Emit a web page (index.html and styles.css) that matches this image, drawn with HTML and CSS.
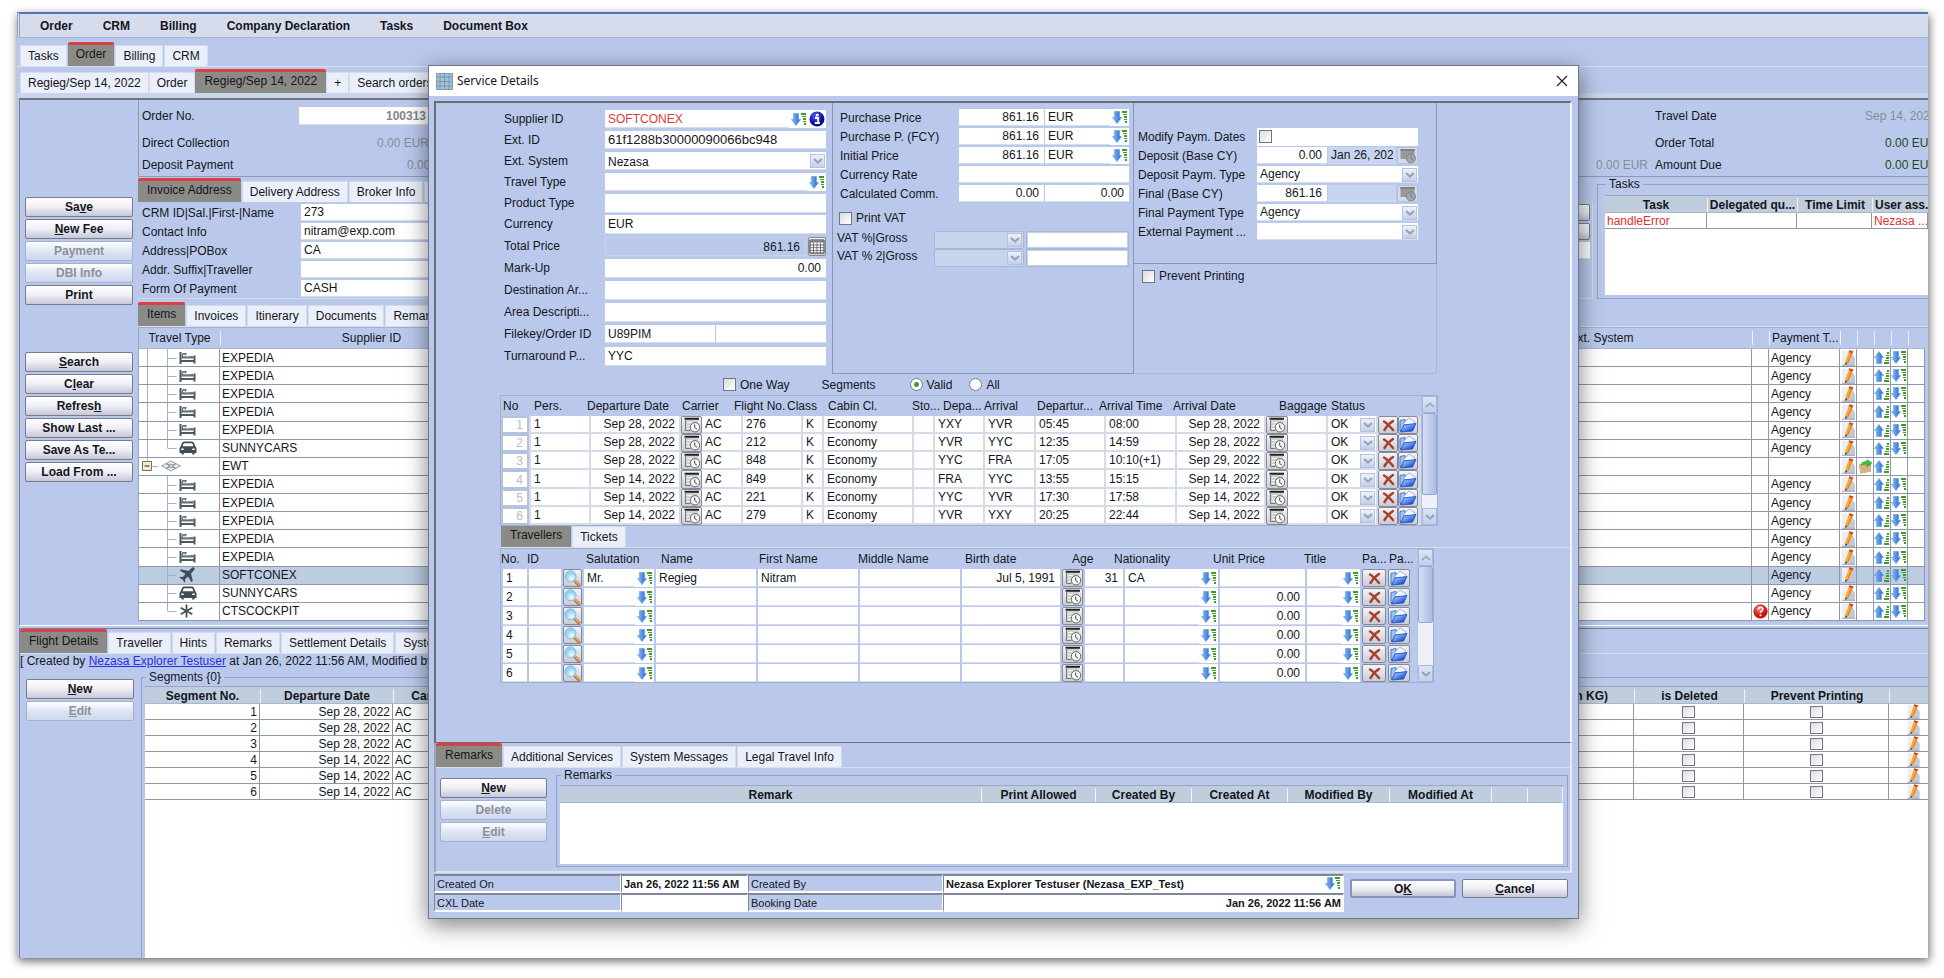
FILE: index.html
```html
<!DOCTYPE html>
<html lang="en">
<head>
<meta charset="utf-8">
<title>Service Details</title>
<link rel="stylesheet" href="styles.css">
</head>
<body>
<svg class="defs" width="0" height="0" aria-hidden="true">
  <defs>
    <linearGradient id="gBlue" x1="0" x2="1"><stop offset="0" stop-color="#8cc4fb"/><stop offset="1" stop-color="#2463c4"/></linearGradient>
    <linearGradient id="gFold" x1="0" y1="0" x2="1" y2="1"><stop offset="0" stop-color="#d8ecff"/><stop offset=".8" stop-color="#1550d8"/></linearGradient>
    <radialGradient id="gLens" cx=".6" cy=".7"><stop offset="0" stop-color="#f2fcff"/><stop offset="1" stop-color="#8fd3f2"/></radialGradient>
    <radialGradient id="gInfo" cx=".4" cy=".3"><stop offset="0" stop-color="#5a64f0"/><stop offset="1" stop-color="#0a0a9c"/></radialGradient>
    <radialGradient id="gHelp" cx=".4" cy=".3"><stop offset="0" stop-color="#ff8a80"/><stop offset="1" stop-color="#c8120e"/></radialGradient>
  </defs>
  <symbol id="i-down" viewBox="0 0 16 13"><path d="M2.500.5h5v6h2L5 12.500.5 6.500h2z" fill="url(#gBlue)" stroke="#5b98e4" stroke-width=".6"/><g fill="#3d9a22"><path d="M10 0h5v2h-5zM11 3h4v1h-4zM12 5h3v2h-3zM12 8h3v1h-3zM13 10h2v2h-2z"/></g></symbol>
  <symbol id="i-up" viewBox="0 0 16 13"><path d="M2.500 12.500h5v-6h2L5 .5.5 6.500h2z" fill="url(#gBlue)" stroke="#5b98e4" stroke-width=".6"/><g fill="#3d9a22"><path d="M13 1h2v2h-2zM12 4h3v1h-3zM12 6h3v2h-3zM11 9h4v1h-4zM10 11h5v2h-5z"/></g></symbol>
  <symbol id="i-pencil" viewBox="0 0 15 16"><path d="M1 1h10v14H1z" fill="#eceef4"/><path d="M11 4l3 4v7H4l4-4z" fill="#c2c8d8"/><path d="M1 15.300h13" stroke="#9ba2b6"/><path d="M8.500.3l3.800 1.200-4.800 11-3.200 2.200.1-4z" fill="#f7ad2c"/><path d="M10.700 1l1.600.5-4.800 11-1.600 1z" fill="#e88220"/><path d="M8.500.3l3.800 1.200-.9 2-3.700-1.300z" fill="#d8452c"/><path d="M4.400 12.300l-.2 2.700 2.100-1.500z" fill="#333"/></symbol>
  <symbol id="i-bed" viewBox="0 0 17 12"><path d="M1.500 0v12M1 9h15M15.500 3.500v8" stroke="#4b5960" stroke-width="2" fill="none"/><path d="M2 6l1.500-5H8L6 4.500 14.500 4v2.500H2z" fill="#65737a"/><path d="M4 3.500h2" stroke="#fff" stroke-width="1.400"/></symbol>
  <symbol id="i-car" viewBox="0 0 18 14"><path d="M3.200 1.500Q4 .5 5 .5h8q1 0 1.800 1L16.500 5.500l1 1.500v5h-2v1.500h-2.300V12H4.800v1.500H2.500V12h-2V7l1-1.500z" fill="#404e57"/><path d="M4.800 2.200h8.400l1.200 3H3.600z" fill="#fff"/><path d="M2.200 8.300h2.500M13.300 8.300h2.500" stroke="#fff" stroke-width="1.400"/></symbol>
  <symbol id="i-plane" viewBox="0 0 16 16"><path d="M15.300.7q-1.200-1-3.400 1L9.500 4 2 2.200.7 3.500 6.500 7 3.800 10 1.400 9.700.5 10.700l3.100 1.700 1.700 3.100 1-.9-.3-2.400L9 9.500l3.500 5.800 1.300-1.300L12 6.500l2.300-2.400q2-2.200 1-3.400z" fill="#404e57"/></symbol>
  <symbol id="i-star" viewBox="0 0 14 14"><path d="M7 .5v13M1.200 3.700l11.600 6.600M1.200 10.300l11.600-6.600" stroke="#404e57" stroke-width="1.700"/></symbol>
  <symbol id="i-group" viewBox="0 0 20 12"><path d="M10 1l5 2.500 4.500 2.500-9.500 5-9.500-5L5 3.500z" fill="#e4e7ea" stroke="#9aa3a8"/><path d="M5 3.500l10 5M15 3.500l-10 5" stroke="#7f898f" stroke-width="1.300"/><ellipse cx="10" cy="6" rx="2.200" ry="1.200" fill="#fff" stroke="#7f898f"/></symbol>
  <symbol id="i-minus" viewBox="0 0 10 10"><path d="M.5.5h9v9h-9z" fill="#f5edd0" stroke="#7b6f4c"/><path d="M2.500 5h5" stroke="#222"/></symbol>
  <symbol id="i-help" viewBox="0 0 15 15"><circle cx="7.500" cy="7.500" r="6.800" fill="url(#gHelp)" stroke="#a91a16" stroke-width=".6"/><path d="M5.300 5.600q0-2.300 2.200-2.300t2.200 2q0 1-1.200 1.800-1 .6-1 1.700" fill="none" stroke="#fff" stroke-width="1.600"/><circle cx="7.500" cy="11.200" r="1" fill="#fff"/></symbol>
  <symbol id="i-move" viewBox="0 0 15 15"><path d="M1 5.500l5-.5 1 1 6-1v7.500L2.500 14.500z" fill="#b8955c"/><path d="M1 5.500l12 1.500v5.500L2.500 14.500z" fill="#d3b57e"/><path d="M3 6q1-4 6-3.500V.5l5 3.500-5 3.500V5.500Q5.500 5 3 6z" fill="#3fbf3a" stroke="#2b8f28" stroke-width=".5"/></symbol>
  <symbol id="i-cal" viewBox="0 0 18 16"><path d="M2.500 1.500h12.500v10H2.500z" fill="#d0d0ce"/><path d="M1.500 1.800h14.500" stroke="#222" stroke-width="2"/><path d="M4 5.500h5M4 8.500h3M4 11.500h3" stroke="#f4f4f4"/><path d="M2.500 2v11.500h5" stroke="#777" fill="none"/><circle cx="12" cy="10.300" r="4.700" fill="#f7f7f7" stroke="#666"/><path d="M11.700 7.500v3l2.300 1.800" stroke="#444" fill="none"/></symbol>
  <symbol id="i-caloff" viewBox="0 0 18 16"><path d="M1.500 1h14v10h-14z" fill="#98999c"/><path d="M1.500 2h14.500" stroke="#808184" stroke-width="2"/><circle cx="12" cy="10.500" r="4.500" fill="#a5a6a9" stroke="#808184"/><path d="M12 7.500v3l2.300 1.700" stroke="#77787b" fill="none"/></symbol>
  <symbol id="i-lens" viewBox="0 0 17 17"><path d="M10.500 10.500l5 5" stroke="#b06c22" stroke-width="3"/><path d="M10.500 10l5 5" stroke="#f2b35c" stroke-width="1.200"/><circle cx="6.500" cy="6.300" r="5.500" fill="url(#gLens)" stroke="#8fb9d2"/></symbol>
  <symbol id="i-x" viewBox="0 0 13 13"><path d="M2 2.500q3.500 2 9 8.500M11 2Q6 5 2.500 11" stroke="#a8402b" stroke-width="2.500" fill="none" stroke-linecap="round"/></symbol>
  <symbol id="i-open" viewBox="0 0 18 16"><path d="M1 3.500L6 2.500v11H1z" fill="#9cc4f6" stroke="#1b57c8" stroke-width=".7"/><path d="M4 7l6-6 6 4-3 4z" fill="#f4f8ff" stroke="#7a9cd4" stroke-width=".7"/><path d="M5 8l12-1.500-3.500 7.500L1.500 15z" fill="url(#gFold)" stroke="#0f49c6" stroke-width=".8"/></symbol>
  <symbol id="i-calc" viewBox="0 0 16 15"><path d="M1 1h14v13H1z" fill="#fff" stroke="#333"/><path d="M1 2.500h14" stroke="#777" stroke-width="2"/><path d="M1 6h14M1 8.700h14M1 11.400h14M4.500 4v10M8 4v10M11.500 4v10" stroke="#555" stroke-width=".8"/></symbol>
  <symbol id="i-info" viewBox="0 0 16 16"><circle cx="8" cy="8" r="7.500" fill="url(#gInfo)"/><circle cx="8.300" cy="4" r="1.500" fill="#fff"/><path d="M6 7h3.200v4.500M5.800 12h5" stroke="#fff" stroke-width="1.800" fill="none"/></symbol>
  <symbol id="i-app" viewBox="0 0 17 17"><path d="M0 0h17v17H0z" fill="#a6c2d0"/><path d="M0 4h17M0 8.500h17M0 13h17M4 0v17M8.500 0v17M13 0v17" stroke="#7799ae"/><path d="M.5.5h16v16H.5z" fill="none" stroke="#7b9db1"/></symbol>
  <symbol id="i-close" viewBox="0 0 12 12"><path d="M1 1l10 10M11 1L1 11" stroke="#222" stroke-width="1.200"/></symbol>
  <symbol id="i-chev" viewBox="0 0 10 6"><path d="M1 1l4 3.500L9 1" stroke="#9aa3b6" stroke-width="2.200" fill="none"/></symbol>
  <symbol id="i-chevup" viewBox="0 0 10 6"><path d="M1 5l4-3.500L9 5" stroke="#a3adc0" stroke-width="2" fill="none"/></symbol>
</svg>

<div class="app">
  <nav class="menu">
    <a href="#">Order</a><a href="#">CRM</a><a href="#">Billing</a><a href="#">Company Declaration</a><a href="#">Tasks</a><a href="#">Document Box</a>
  </nav>
  <div class="tabs big first"><button>Tasks</button><button class="on">Order</button><button>Billing</button><button>CRM</button></div>
  <div class="tabs big second"><button>Regieg/Sep 14, 2022</button><button>Order</button><button class="on">Regieg/Sep 14, 2022</button><button>+</button><button>Search orders</button></div>

  <main class="order">
    <aside class="side">
      <div class="btns">
        <button class="btn">Sa<u>v</u>e</button><button class="btn"><u>N</u>ew Fee</button><button class="btn" disabled>Payment</button><button class="btn" disabled>DBI Info</button><button class="btn">Print</button>
      </div>
      <div class="btns">
        <button class="btn"><u>S</u>earch</button><button class="btn">C<u>l</u>ear</button><button class="btn">Refres<u>h</u></button><button class="btn">Show Last ...</button><button class="btn">Save As Te...</button><button class="btn">Load From ...</button>
      </div>
    </aside>
    <div class="content">
      <section class="summary">
        <label for="orderNo">Order No.</label><input id="orderNo" class="orderno" value="100313"><span></span><span></span><span>Travel Date</span><span class="mute">Sep 14, 2022</span>
        <span>Direct Collection</span><span class="mute v1">0.00 EUR</span><span></span><span></span><span>Order Total</span><span class="green">0.00 EUR</span>
        <span>Deposit Payment</span><span class="mute v2">0.00 EUR</span><span></span><span class="mute">0.00 EUR</span><span>Amount Due</span><span class="green">0.00 EUR</span>
      </section>
      <section class="middle">
        <div class="addr">
          <div class="tabs"><button class="on">Invoice Address</button><button>Delivery Address</button><button>Broker Info</button><button>Agency Info</button></div>
          <div class="addrbody">
            <div class="addrform">
              <label for="crm">CRM ID|Sal.|First-|Name</label><input id="crm" value="273">
              <label for="contact">Contact Info</label><input id="contact" value="nitram@exp.com">
              <label for="address">Address|POBox</label><input id="address" value="CA">
              <label for="suffix">Addr. Suffix|Traveller</label><input id="suffix">
              <label for="fop">Form Of Payment</label><input id="fop" value="CASH">
            </div>
            <div class="addrtools"><button class="btn" aria-label="Search address"></button><button class="btn" aria-label="Edit address"></button><input aria-label="Address type"></div>
          </div>
        </div>
        <fieldset class="tasks">
          <legend>Tasks</legend>
          <div class="sheet">
            <table class="grid bold taskgrid">
              <thead><tr><th>Task</th><th>Delegated qu...</th><th>Time Limit</th><th class="l">User ass...</th></tr></thead>
              <tbody><tr class="red"><td>handleError</td><td></td><td></td><td>Nezasa ...</td></tr></tbody>
            </table>
          </div>
        </fieldset>
      </section>
      <section class="itemsbox">
        <div class="tabs"><button class="on">Items</button><button>Invoices</button><button>Itinerary</button><button>Documents</button><button>Remarks</button></div>
        <table class="grid items">
          <thead><tr><th>Travel Type</th><th>Supplier ID</th><th></th><th>Ext. System</th><th></th><th class="l">Payment T...</th><th></th><th></th><th></th><th></th><th></th></tr></thead>
          <tbody id="items"></tbody>
        </table>
      </section>
    </div>
  </main>

  <section class="lower">
    <div class="tabs"><button class="on">Flight Details</button><button>Traveller</button><button>Hints</button><button>Remarks</button><button>Settlement Details</button><button>System Messages</button></div>
    <p class="audit">[ Created by <a href="#">Nezasa Explorer Testuser</a> at Jan 26, 2022 11:56 AM, Modified by</p>
    <div class="lowerbody">
      <div class="btns"><button class="btn"><u>N</u>ew</button><button class="btn" disabled><u>E</u>dit</button></div>
      <fieldset class="segbox">
        <legend>Segments {0}</legend>
        <div class="sheet">
          <table class="grid bold flights">
            <thead><tr><th>Segment No.</th><th>Departure Date</th><th>Carrier</th><th></th><th>Baggage (in KG)</th><th>is Deleted</th><th>Prevent Printing</th><th></th></tr></thead>
            <tbody id="flights"></tbody>
          </table>
        </div>
      </fieldset>
    </div>
  </section>

  <div class="dialog" role="dialog" aria-label="Service Details">
    <header class="title"><svg width="17" height="17"><use href="#i-app"/></svg><h1>Service Details</h1><button class="close" aria-label="Close"><svg width="12" height="12"><use href="#i-close"/></svg></button></header>
    <div class="pane">
      <div class="top">
        <div class="supplier">
          <label for="sup">Supplier ID</label><span class="look"><input id="sup" class="redtext" value="SOFTCONEX"><button aria-label="Choose supplier"><svg width="16" height="13"><use href="#i-down"/></svg></button><button aria-label="Supplier info"><svg width="16" height="16"><use href="#i-info"/></svg></button></span>
          <label for="extid">Ext. ID</label><input id="extid" class="wide" value="61f1288b30000090066bc948">
          <label for="extsys">Ext. System</label><span class="combo"><select id="extsys"><option>Nezasa</option></select><i><svg width="10" height="6"><use href="#i-chev"/></svg></i></span>
          <label for="ttype">Travel Type</label><span class="look"><input id="ttype"><button aria-label="Choose travel type"><svg width="16" height="13"><use href="#i-down"/></svg></button></span>
          <label for="ptype">Product Type</label><input id="ptype">
          <label for="cur">Currency</label><input id="cur" value="EUR">
          <label for="total">Total Price</label><span class="totals"><input id="total" class="r ro" value="861.16" readonly><button class="tool" aria-label="Calculator"><svg width="16" height="15"><use href="#i-calc"/></svg></button></span>
          <label for="mark">Mark-Up</label><input id="mark" class="r" value="0.00">
          <label for="dest">Destination Ar...</label><input id="dest">
          <label for="area">Area Descripti...</label><input id="area">
          <label for="fkey">Filekey/Order ID</label><span class="pair"><input id="fkey" value="U89PIM"><input aria-label="Order ID"></span>
          <label for="turn">Turnaround P...</label><input id="turn" value="YYC">
        </div>
        <div class="prices">
          <div class="priceform">
            <label for="pp">Purchase Price</label><input id="pp" class="r" value="861.16"><span class="look"><input aria-label="Purchase currency" value="EUR"><button aria-label="Choose currency"><svg width="16" height="13"><use href="#i-down"/></svg></button></span>
            <label for="pf">Purchase P. (FCY)</label><input id="pf" class="r" value="861.16"><span class="look"><input aria-label="Foreign currency" value="EUR"><button aria-label="Choose currency"><svg width="16" height="13"><use href="#i-down"/></svg></button></span>
            <label for="ip">Initial Price</label><input id="ip" class="r" value="861.16"><span class="look"><input aria-label="Initial currency" value="EUR"><button aria-label="Choose currency"><svg width="16" height="13"><use href="#i-down"/></svg></button></span>
            <label for="rate">Currency Rate</label><input id="rate" class="span2">
            <label for="comm">Calculated Comm.</label><input id="comm" class="r" value="0.00"><input aria-label="Commission amount" class="r" value="0.00">
          </div>
          <label class="check printvat"><input type="checkbox">Print VAT</label>
          <div class="vatform">
            <label for="vat1">VAT %|Gross</label><span class="combo off"><select id="vat1" disabled><option></option></select><i><svg width="10" height="6"><use href="#i-chev"/></svg></i></span><input aria-label="Gross">
            <label for="vat2">VAT % 2|Gross</label><span class="combo off"><select id="vat2" disabled><option></option></select><i><svg width="10" height="6"><use href="#i-chev"/></svg></i></span><input aria-label="Gross 2">
          </div>
        </div>
        <div class="payments">
          <div class="payform">
            <label for="mod">Modify Paym. Dates</label><span class="checkcell"><input id="mod" type="checkbox"></span>
            <label for="dep">Deposit (Base CY)</label><span class="amount"><input id="dep" class="r" value="0.00"><input aria-label="Deposit date" value="Jan 26, 2022" class="ro"><button class="tool flat" aria-label="Pick date"><svg width="18" height="16"><use href="#i-caloff"/></svg></button></span>
            <label for="dpt">Deposit Paym. Type</label><span class="combo"><select id="dpt"><option>Agency</option></select><i><svg width="10" height="6"><use href="#i-chev"/></svg></i></span>
            <label for="fin">Final (Base CY)</label><span class="amount"><input id="fin" class="r" value="861.16"><input aria-label="Final date" class="ro"><button class="tool flat" aria-label="Pick date"><svg width="18" height="16"><use href="#i-caloff"/></svg></button></span>
            <label for="fpt">Final Payment Type</label><span class="combo"><select id="fpt"><option>Agency</option></select><i><svg width="10" height="6"><use href="#i-chev"/></svg></i></span>
            <label for="ext">External Payment ...</label><span class="combo"><select id="ext"><option></option></select><i><svg width="10" height="6"><use href="#i-chev"/></svg></i></span>
          </div>
          <div class="prevent"><label class="check"><input type="checkbox">Prevent Printing</label></div>
        </div>
      </div>
      <div class="options">
        <label class="check"><input type="checkbox">One Way</label><span>Segments</span>
        <label class="check"><input type="radio" name="seg" checked>Valid</label><label class="check"><input type="radio" name="seg">All</label>
      </div>
      <div class="scrollbox segs">
        <table class="cells segtable">
          <thead><tr><th>No</th><th>Pers.</th><th>Departure Date</th><th>Carrier</th><th>Flight No.</th><th>Class</th><th>Cabin Cl.</th><th>Sto...</th><th>Depa...</th><th>Arrival</th><th>Departur...</th><th>Arrival Time</th><th>Arrival Date</th><th>Baggage</th><th>Status</th></tr></thead>
          <tbody id="segs"></tbody>
        </table>
        <div class="bar"><b><svg width="10" height="6"><use href="#i-chevup"/></svg></b><s></s><em></em><b><svg width="10" height="6"><use href="#i-chev"/></svg></b></div>
      </div>
      <div class="tabs plain"><button class="on">Travellers</button><button>Tickets</button></div>
      <div class="scrollbox trav">
        <table class="cells travtable">
          <thead><tr><th>No.</th><th>ID</th><th>Salutation</th><th>Name</th><th>First Name</th><th>Middle Name</th><th>Birth date</th><th>Age</th><th>Nationality</th><th>Unit Price</th><th>Title</th><th>Pa...</th><th>Pa...</th></tr></thead>
          <tbody id="trav"></tbody>
        </table>
        <div class="bar short"><b><svg width="10" height="6"><use href="#i-chevup"/></svg></b><s></s><em></em><b><svg width="10" height="6"><use href="#i-chev"/></svg></b></div>
      </div>
    </div>
    <div class="remarks">
      <div class="tabs"><button class="on">Remarks</button><button>Additional Services</button><button>System Messages</button><button>Legal Travel Info</button></div>
      <div class="remarksbody">
        <div class="btns"><button class="btn"><u>N</u>ew</button><button class="btn" disabled>Delete</button><button class="btn" disabled><u>E</u>dit</button></div>
        <fieldset>
          <legend>Remarks</legend>
          <div class="sheet">
            <table class="grid bold remgrid"><thead><tr><th>Remark</th><th>Print Allowed</th><th>Created By</th><th>Created At</th><th>Modified By</th><th>Modified At</th><th></th><th></th><th></th></tr></thead></table>
          </div>
        </fieldset>
      </div>
    </div>
    <footer class="foot">
      <dl>
        <dt>Created On</dt><dd>Jan 26, 2022 11:56 AM</dd><dt>Created By</dt><dd class="by">Nezasa Explorer Testuser (Nezasa_EXP_Test)<svg width="16" height="13"><use href="#i-down"/></svg></dd>
        <dt>CXL Date</dt><dd></dd><dt>Booking Date</dt><dd class="r">Jan 26, 2022 11:56 AM</dd>
      </dl>
      <button class="btn primary">O<u>K</u></button><button class="btn"><u>C</u>ancel</button>
    </footer>
  </div>
</div>
<script src="app.js"></script>
</body>
</html>
```

FILE: app.js
```js
const icon = (name, w, h) => `<svg width="${w}" height="${h}"><use href="#i-${name}"/></svg>`;
const fill = (id, rows) => { document.getElementById(id).innerHTML = rows.join(''); };
const field = (label, value = '', cls = '') => `<td><input aria-label="${label}" value="${value}" class="${cls}"></td>`;
const tool = (label, svg) => `<td><button class="tool" aria-label="${label}">${svg}</button></td>`;
const lookup = (label, value = '') =>
  `<td><span class="look"><input aria-label="${label}" value="${value}"><button aria-label="Choose ${label}">${icon('down', 16, 13)}</button></span></td>`;

/* Order items: [icon, supplier, outer branch continues, last child] */
const items = [
  ['bed', 'EXPEDIA', 1, 0], ['bed', 'EXPEDIA', 1, 0], ['bed', 'EXPEDIA', 1, 0], ['bed', 'EXPEDIA', 1, 0], ['bed', 'EXPEDIA', 1, 0],
  ['car', 'SUNNYCARS', 1, 1], ['group', 'EWT', 0, 0],
  ['bed', 'EXPEDIA', 0, 0], ['bed', 'EXPEDIA', 0, 0], ['bed', 'EXPEDIA', 0, 0], ['bed', 'EXPEDIA', 0, 0], ['bed', 'EXPEDIA', 0, 0],
  ['plane', 'SOFTCONEX', 0, 0], ['car', 'SUNNYCARS', 0, 0], ['star', 'CTSCOCKPIT', 0, 1]
];
const size = { bed: [17, 12], car: [18, 14], plane: [16, 16], star: [15, 14] };
fill('items', items.map(([kind, name, outer, last]) => {
  const group = kind === 'group';
  const branch = group
    ? `<svg width="20" height="18"><path d="M8.500 0v5M13 9.500h6"/></svg>`
    : `<svg width="38" height="18"><path d="${outer ? 'M8.500 0v18' : ''}M28.500 0v${last ? 9 : 18}M28.500 9.500h9"/></svg>`;
  const tree = group
    ? `<span class="tree group">${branch}${icon('minus', 10, 10)}${icon('group', 20, 12)}</span>`
    : `<span class="tree">${branch}<span class="kind">${icon(kind, ...size[kind])}</span></span>`;
  return `<tr class="${kind === 'plane' ? 'sel' : ''}"><td>${tree}</td><td>${name}</td><td></td><td></td>
    <td class="ic">${kind === 'star' ? icon('help', 15, 15) : ''}</td><td>${group ? '' : 'Agency'}</td>
    <td class="ic">${icon('pencil', 15, 16)}</td><td class="ic">${group ? icon('move', 15, 15) : ''}</td>
    <td class="ic">${icon('up', 16, 13)}</td><td class="ic">${group ? '' : icon('down', 16, 13)}</td><td></td></tr>`;
}));

/* Flight segments, shared by the order view and the service window */
const segments = [
  ['Sep 28, 2022', '276', 'YXY', 'YVR', '05:45', '08:00', 'Sep 28, 2022'],
  ['Sep 28, 2022', '212', 'YVR', 'YYC', '12:35', '14:59', 'Sep 28, 2022'],
  ['Sep 28, 2022', '848', 'YYC', 'FRA', '17:05', '10:10(+1)', 'Sep 29, 2022'],
  ['Sep 14, 2022', '849', 'FRA', 'YYC', '13:55', '15:15', 'Sep 14, 2022'],
  ['Sep 14, 2022', '221', 'YYC', 'YVR', '17:30', '17:58', 'Sep 14, 2022'],
  ['Sep 14, 2022', '279', 'YVR', 'YXY', '20:25', '22:44', 'Sep 14, 2022']
];
fill('flights', segments.map((s, i) => `<tr><td class="r">${i + 1}</td><td class="r">${s[0]}</td><td>AC</td><td></td><td></td>
  <td class="ic"><input type="checkbox" aria-label="Segment ${i + 1} is deleted"></td><td class="ic"><input type="checkbox" aria-label="Segment ${i + 1} prevent printing"></td>
  <td class="ic edit">${icon('pencil', 15, 15)}</td></tr>`));
fill('segs', segments.map((s, i) => '<tr>' +
  field('No', i + 1, 'r num') + field('Persons', '1') + field('Departure date', s[0], 'r') + tool('Pick departure date', icon('cal', 18, 16)) +
  field('Carrier', 'AC') + field('Flight number', s[1]) + field('Class', 'K') + field('Cabin class', 'Economy') + field('Stops') +
  field('Departure', s[2]) + field('Arrival', s[3]) + field('Departure time', s[4]) + field('Arrival time', s[5]) +
  field('Arrival date', s[6], 'r') + tool('Pick arrival date', icon('cal', 18, 16)) + field('Baggage') +
  `<td><span class="combo"><select aria-label="Status"><option>OK</option></select><i>${icon('chev', 10, 6)}</i></span></td>` +
  tool('Delete segment', icon('x', 13, 13)) + tool('Open segment', icon('open', 18, 16)) + '</tr>'));

const travellers = [['Mr.', 'Regieg', 'Nitram', 'Jul 5, 1991', '31', 'CA', ''], [], [], [], [], []];
fill('trav', travellers.map((t, i) => {
  const [sal, name, first, born, age, nat, price = '0.00'] = t;
  return '<tr>' + field('No', i + 1) + field('ID') + tool('Find traveller', icon('lens', 17, 17)) + lookup('salutation', sal) +
    field('Name', name) + field('First name', first) + field('Middle name') + field('Birth date', born, 'r') +
    tool('Pick birth date', icon('cal', 18, 16)) + field('Age', age, 'r') + lookup('nationality', nat) +
    field('Unit price', price, 'r') + lookup('title') + tool('Delete', icon('x', 13, 13)) + tool('Open', icon('open', 18, 16)) + '</tr>';
}));
```

FILE: styles.css
```css
* { box-sizing: border-box; }
body { margin: 0; padding: 12px 16px 20px 17px; background: #fff; font: 12px/14px "Liberation Sans", Arial, sans-serif; color: #14161c; }
button, input, select { font: inherit; color: inherit; margin: 0; }
button { padding: 0; border: 0; background: none; }
svg { display: block; flex: none; }
.defs { position: absolute; }
label, th, td, span, p { white-space: nowrap; }

.app { position: relative; display: flex; flex-direction: column; min-height: calc(100vh - 32px); background: #bac9eb; box-shadow: 1px 3px 9px rgba(0, 0, 0, .6); }

/* Menu and tabs */
.menu { display: flex; align-items: center; gap: 30px; height: 26px; padding: 0 20px; border-top: 2px solid #4f73b3; border-bottom: 1px solid #a6b5d8; border-left: 3px double #9aa3b8; background: #d6dcec; font-weight: bold; }
.menu a { color: inherit; text-decoration: none; }
.tabs { display: flex; align-items: flex-end; gap: 1px; height: 25px; border-bottom: 1px solid #d8e0ee; }
.tabs button { height: 21px; padding: 0 7px; border: 1px solid #d3dcef; border-bottom: 0; background: #eaeff9; }
.tabs .on { height: 24px; padding: 0 9px 3px; border: 0; border-top: 3px solid #d93f44; border-radius: 2px 2px 0 0; background: #8b8b86; }
.tabs.plain { height: 22px; }
.tabs.plain .on { height: 21px; border-top: 0; border-radius: 0; }
.big { height: 29px; padding-left: 3px; }
.first button, .first .on { padding-left: 7px; padding-right: 7px; }
.first .on { padding-left: 8px; padding-right: 8px; }
.big.second { gap: 0; height: 31px; border-bottom: 5px solid #cad4ea; }

/* Push buttons */
.btns { display: flex; flex-direction: column; gap: 2px; }
.btn { height: 20px; border: 1px solid #777c8d; border-radius: 2px; background: linear-gradient(#fff, #eeeef5 50%, #c6c7d8); font-weight: bold; }
.btn:disabled { color: #8d9096; border-color: #a3b0cf; background: linear-gradient(#fff, #dde5f5 50%, #cdd8ef); }
.primary { border: 2px solid #8296c0; }

/* Fields */
input, select { width: 100%; min-width: 0; height: 17px; padding: 0 3px; border: 0; border-bottom: 1px solid #d5dcea; border-radius: 0; background: #fff; outline: 0; }
.r { text-align: right; padding-right: 5px; }
.wide { font-size: 13px; }
.ro { background: #c8d5ee; }
.redtext { color: #e0393c; }
.look { display: flex; align-items: center; background: #fff; gap: 2px; padding-right: 1px; }
.look button { display: flex; }
.look input { flex: 1; height: 17px; }
.combo { display: grid; align-items: center; background: #fff; }
.combo > * { grid-area: 1 / 1; }
.combo select { appearance: none; background: none; opacity: 1; }
.combo i { display: grid; place-items: center; justify-self: end; width: 15px; height: 14px; margin-right: 1px; border: 1px solid #b4c2e2; background: linear-gradient(#eef2fb, #c3cfea); pointer-events: none; }
.combo.off { border: 1px solid #aab8d6; border-radius: 2px; background: #c8d5ee; }
.tool { display: grid; place-items: center; width: 100%; height: 100%; overflow: hidden; border: 1px solid #858a98; border-radius: 2px; background: linear-gradient(#f4f4f8, #c9cbd6); }
.tool.flat { border-color: #b4c0dc; background: #d3dcef; }
input[type=checkbox] { appearance: none; flex: none; width: 13px; height: 13px; padding: 0; border: 1px solid #6f7683; background: linear-gradient(135deg, #dcdcdc, #fff); }
input[type=radio] { appearance: none; flex: none; width: 13px; height: 13px; padding: 0; border: 1px solid #777e8b; border-radius: 50%; background: #fff; }
input[type=radio]:checked { background: radial-gradient(circle, #3e9b2d 0 2px, #fff 3px); }
.check { display: flex; align-items: center; gap: 4px; }

/* Data tables: each row is a grid that takes its columns from the table */
table, thead, tbody { display: block; }
tr { display: grid; grid-template-columns: var(--cols); grid-template-rows: minmax(0, 1fr); min-height: 0; }
th, td { display: flex; align-items: center; min-width: 0; min-height: 0; padding: 0; font-weight: normal; overflow: hidden; }
.grid tbody tr { border-bottom: 1px solid #8f97a8; background: #fff; }
.grid td { padding: 0 2px; border-right: 1px solid #8f97a8; }
.grid td.r { justify-content: flex-end; }
.grid td.ic { justify-content: center; padding: 0; }
.grid th { justify-content: center; position: relative; }
.grid th.l { justify-content: flex-start; padding-left: 2px; }
.grid th + th { border-left: 1px solid #eef2fa; }
.grid thead tr { height: 21px; padding: 3px 0 3px; border-bottom: 1px solid #a9b6cc; }
.bold thead tr { height: 18px; padding: 2px 0 0; border-top: 1px solid #9aa8c2; border-bottom: 1px solid #a9b8cc; background: #bfcddd; }
.bold th { font-weight: bold; }
.grid .red { color: #e0302e; }
.grid .sel { background: #bccde2; }

fieldset { min-width: 0; margin: 0; padding: 3px; border: 1px solid #94a3c4; }
legend { padding: 0 3px; margin-left: 1px; }
.sheet { background: #fff; height: 100%; overflow: hidden; }

/* Order view */
.order { display: flex; border-top: 2px solid #6f7582; margin-left: 2px; border-left: 1px solid #7a8090; border-bottom: 1px solid #fff; }
.side { flex: none; width: 118px; padding: 97px 5px 0; display: flex; flex-direction: column; gap: 47px; }
.content { flex: 1; min-width: 0; }
.summary { display: grid; grid-template-columns: 157px 160px 1fr 59px 210px 63px; grid-template-rows: 32px 22px 22px; align-items: center; padding-left: 3px; border-left: 1px solid #8f9ab2; border-bottom: 1px solid #8f9ab2; }
.summary > span { overflow: hidden; }
.summary .orderno { width: 130px; height: 18px; text-align: right; font-weight: bold; color: #84878c; }
.mute { color: #888d98; }
.green { padding-left: 20px; color: #1c4a20; }
.summary .v1 { width: 130px; text-align: right; }
.summary .v2 { text-align: right; }
.middle { display: flex; gap: 4px; height: 123px; }
.addr { flex: 1; min-width: 0; padding-top: 1px; }
.addr .tabs { border-bottom-color: #bac9eb; }
.addrbody { display: flex; justify-content: space-between; border-right: 1px solid #d5dbe8; border-bottom: 1px solid #d5dbe8; }
.addrform { display: grid; grid-template-columns: 159px 400px; grid-auto-rows: 19px; align-items: center; padding-left: 4px; }
.addrtools { display: grid; grid-auto-rows: 17px; gap: 2px; width: 60px; padding: 1px 2px 0 0; }
.addrtools .btn { height: 17px; }
.tasks { width: 331px; height: 122px; padding: 4px 0 3px 7px; border-right: 0; }
.taskgrid { --cols: 102px 90px 75px 1fr; }
.taskgrid tbody tr { height: 16px; }
.itemsbox { padding: 2px 0 4px; }
.items { --cols: 81px 302px 1fr 302px 17px 71px 17px 17px 17px 17px 17px; padding-right: 3px; border-left: 1px solid #9aa5bb; border-top: 1px solid #a3b0ca; }
.items tbody { display: grid; grid-auto-rows: minmax(0, 1fr); height: 272px; }
.items td:nth-child(2), .items td:nth-child(3) { border-right: 0; }
.items td:first-child { border-right: 1px solid #8f97a8; }
.tree { display: flex; align-items: center; gap: 2px; margin-left: -2px; }
.tree > svg path { fill: none; stroke: #a3b2d0; }
.group { display: grid; grid-template-columns: 20px 22px; }
.group svg { grid-area: 1 / 1; }
.group svg:nth-child(2) { margin-left: 3px; }
.group svg:nth-child(3) { grid-area: 1 / 2; }

/* Flight details */
.lower { flex: 1; display: flex; flex-direction: column; margin-left: 2px; border-left: 1px solid #7a8090; border-top: 1px solid #7a8090; margin-top: 2px; }
.audit { margin: 0 0 2px; height: 14px; }
.audit a { color: #2430e8; }
.lowerbody { flex: 1; display: flex; padding-left: 6px; }
.lowerbody .btns { flex: none; width: 108px; margin: 9px 7px 0 0; }
.segbox { flex: 1; border-right: 0; border-bottom: 0; padding: 2px 0 0 3px; }
.flights { --cols: 115px 133px 75px 1fr 147px 110px 145px 39px; }
.flights tbody tr { height: 16px; }
.flights td:nth-child(4) { border-right: 0; }
.grid td.edit { padding-left: 9px; border-right: 0; }
.flights input[type=checkbox] { height: 12px; }

/* Service window */
.dialog { position: absolute; z-index: 2; left: 411px; right: 349px; top: 53px; padding-bottom: 6px; border: 1px solid #6f7788; background: #bac9eb; box-shadow: 0 6px 22px rgba(0, 0, 0, .5); }
.title { display: flex; align-items: center; height: 30px; padding: 0 10px 0 7px; background: #fff; }
.title h1 { flex: 1; margin: 0 0 0 4px; font: 12px/16px "Noto Sans", sans-serif; }
.pane { margin: 5px 6px 0 5px; padding: 0 0 59px 65px; border: 2px solid #6c6e76; border-right-color: #f2f5fb; border-bottom-width: 1px; }
.top { display: grid; grid-template-columns: 328px 302px 303px; height: 271px; margin-left: 3px; }
.supplier { display: grid; grid-template-columns: 101px 221px; grid-template-rows: repeat(5, 21px) repeat(7, 22px); padding-top: 7px; line-height: 18px; }
.supplier > :nth-child(2n) { height: 18px; }
.supplier > :nth-child(n+9) { height: 19px; }
.totals { display: grid; grid-template-columns: 1fr 18px; gap: 2px; }
.totals .ro { background: #bac9eb; border: 1px solid #c8d2e6; height: 19px; }
.pair { display: grid; grid-template-columns: 1fr 1fr; gap: 1px; }
.pair input { height: 18px; }
.prices { border: 1px solid #8797b5; border-top: 0; }
.priceform { display: grid; grid-template-columns: 118px 85px 84px; grid-auto-rows: 19px; column-gap: 1px; align-items: center; padding: 5px 0 0 7px; }
.priceform .look { height: 17px; }
.span2 { grid-column: span 2; }
.printvat { margin: 8px 0 6px 6px; }
.vatform { display: grid; grid-template-columns: 95px 90px 103px; grid-auto-rows: 18px; column-gap: 2px; padding-left: 4px; }
.vatform input { border: 2px solid #c4d0ec; outline: 1px solid #a9b8da; outline-offset: -1px; height: 18px; }
.combo.off select { height: 15px; border: 0; }
.payments { display: grid; grid-template-rows: 161px 1fr; }
.payform { display: grid; grid-template-columns: 119px 161px; grid-auto-rows: 19px; align-items: center; align-content: start; padding: 24px 0 0 4px; border: 1px solid #8797b5; border-top: 0; border-left: 0; }
.checkcell { background: #fff; height: 18px; padding: 2px; }
.amount { display: grid; grid-template-columns: 70px 68px 21px; gap: 1px; height: 17px; }
.prevent { padding: 5px 8px; border: 1px solid #b3b8c2; border-top: 0; border-left: 0; }
.options { display: flex; align-items: center; height: 21px; padding-left: 222px; }
.options span { margin: 0 34px 0 32px; }
.options label:last-child { margin-left: 17px; }
.scrollbox { display: grid; grid-template-columns: 1fr 16px; width: 938px; border: 1px solid #a3b0cc; margin-left: -1px; }
.cells input, .cells select { height: 100%; border-bottom: 2px solid #d5dbe8; }
.cells td { padding-right: 2px; }
.cells .combo, .cells .look { width: 100%; height: 100%; }
.cells .look input, .cells .combo select { height: 100%; }
.cells tbody { display: grid; }
.cells thead tr { height: 20px; }
.segs { background: #d5dbe8; height: 131px; }
.segtable { --cols: 30px 60px 90px 21px 41px 60px 21px 90px 21px 50px 51px 70px 71px 89px 22px 40px 50px 20px 20px; background: #bac9eb; }
.segtable thead { --cols: 31px 53px 95px 52px 53px 41px 84px 31px 41px 53px 62px 74px 106px 52px 1fr; padding-left: 2px; }
.segtable tbody { grid-template-rows: repeat(6, minmax(0, 1fr)); height: 109px; background: #d5dbe8; }
.segtable td:has(.tool) { padding: 0; }
.segtable .num { color: #b9bcc4; border: 2px solid #b4c2e2; padding-right: 3px; }
.segtable .r { padding-right: 4px; }
.trav { height: 135px; width: 934px; overflow: hidden; }
.travtable { --cols: 26px 34px 21px 72px 102px 102px 102px 100px 23px 40px 95px 87px 55px 26px 24px; padding-left: 2px; min-height: 0; overflow: hidden; }
.travtable thead { --cols: 26px 59px 75px 98px 99px 107px 107px 42px 99px 91px 58px 27px 1fr; margin-left: -2px; }
.travtable tbody { grid-auto-rows: 19px; }
.travtable td { padding-bottom: 1px; }
.travtable input { border-bottom-width: 1px; }
.bar { display: flex; flex-direction: column; background: #eef1f8; border-left: 1px solid #b4c2e2; }
.bar b { display: grid; place-items: center; height: 17px; border: 1px solid #a9b8da; background: linear-gradient(#dde5f6, #c3cfea); }
.bar s { height: 82px; border: 1px solid #94a6d0; border-radius: 2px; background: linear-gradient(90deg, #d6e0f6, #a9bbe3); }
.bar em { flex: 1; }
.bar.short s { height: 57px; }

/* Remarks */
.remarks { margin: 0 6px 0 5px; border-left: 2px solid #9aa5bb; border-right: 2px solid #e5ebf6; border-bottom: 2px solid #dbe3f1; }
.remarksbody { display: flex; gap: 9px; height: 103px; padding: 0 2px 4px 4px; }
.remarksbody .btns { flex: none; width: 107px; padding-top: 10px; }
.remarksbody fieldset { flex: 1; padding: 3px 4px 2px 3px; }
.remgrid { --cols: 421px 114px 96px 96px 102px 102px 36px 35px 1fr; }

.foot { display: flex; align-items: flex-start; gap: 6px; margin: 1px 10px 0 5px; }
.foot dl { flex: 1; display: grid; grid-template-columns: 187px 127px 195px 1fr; grid-auto-rows: 19px; margin: 0; font-size: 11px; }
.foot dt, .foot dd { display: flex; align-items: center; margin: 0; padding: 0 2px; border: 2px solid #7f8798; border-right-color: #fff; border-bottom-color: #fff; border-left-width: 1px; border-right-width: 1px; }
.foot dd { background: #fff; font-weight: bold; }
.foot .r { justify-content: flex-end; }
.foot .by { justify-content: space-between; }
.foot .btn { width: 106px; height: 19px; margin-top: 5px; }
```
